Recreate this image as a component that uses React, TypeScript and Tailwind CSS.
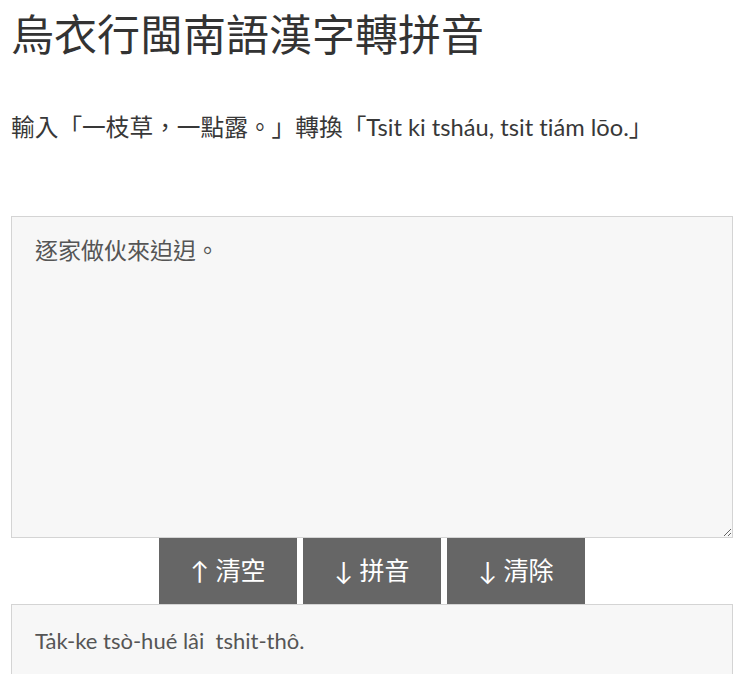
import { useState } from 'react';

const font = { fontFamily: 'Lato, "Noto Sans CJK TC", sans-serif' };

const buttons = ['↑ 清空', '↓ 拼音', '↓ 清除'];

export default function App() {
	const [input, setInput] = useState('逐家做伙來迫迌。');
	const [output, setOutput] = useState('Tȧk-ke tsò-hué lâi  tshit-thô.');

	return (
		<div
			className="h-screen overflow-hidden bg-white pl-[11px] text-[#333] [font-variant-ligatures:none]"
			style={font}
		>
			<div className="w-[722px]">
				<h1 className="pt-[7px] text-[43px] leading-[56px] font-normal text-[#333]">烏衣行閩南語漢字轉拼音</h1>

				<p className="mt-[48px] text-[23.7px] leading-[32px] text-[#383838]">
					輸入「一枝草，一點露。」轉換「Tsit ki tsháu, tsit tiám lōo.」
				</p>

				<textarea
					className="mt-[73px] block h-[322px] w-full border border-[#d4d4d4] bg-[#f7f7f7] px-[23px] py-[17px] text-[23px] leading-[32px] text-[#555] outline-none [font-variant-ligatures:none]"
					value={input}
					onChange={(e) => setInput(e.target.value)}
					style={font}
				/>

				<div className="flex justify-center gap-[6px]">
					{buttons.map((label) => (
						<button
							key={label}
							type="button"
							className="h-[66px] w-[138px] bg-[#666] text-[25px] text-white"
							onClick={() => {
								if (label === '↓ 清除') setOutput('');
								if (label === '↑ 清空') setInput('');
							}}
						>
							{label}
						</button>
					))}
				</div>

				<textarea
					className="block h-[200px] w-full border border-[#d4d4d4] bg-[#f7f7f7] px-[23px] py-[20px] text-[22px] leading-[32px] text-[#555] outline-none [font-variant-ligatures:none]"
					value={output}
					onChange={(e) => setOutput(e.target.value)}
					style={font}
				/>
			</div>
		</div>
	);
}
